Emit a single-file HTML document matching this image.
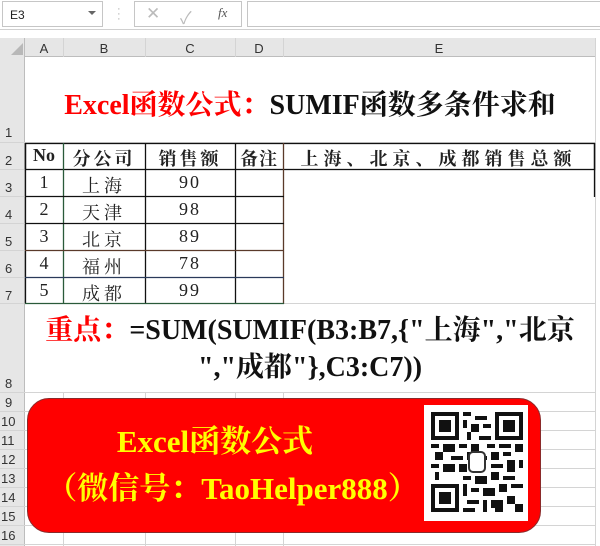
<!DOCTYPE html>
<html><head><meta charset="utf-8"><style>
*{margin:0;padding:0;box-sizing:border-box}
body{width:600px;height:546px;overflow:hidden;background:#fff;position:relative;font-family:"Liberation Sans","Noto Sans CJK SC",sans-serif}
.a{position:absolute}
.ser{font-family:"Liberation Serif","Noto Serif CJK SC",serif}
.hl{position:absolute;background:#d4d4d4}
.c{position:absolute;text-align:center;font-family:"Liberation Serif","Noto Serif CJK SC",serif;font-size:18px;color:#222}
.rh{position:absolute;left:0;width:24px;text-align:left;padding-left:5px;font-size:13px;color:#333}
</style></head><body>
<div class="a" style="left:0;top:0;width:600px;height:30px;background:#fff;border-bottom:1px solid #d0d0d0"></div>
<div class="a" style="left:2px;top:1px;width:101px;height:26px;border:1px solid #c6c6c6;font-size:12px;padding:6px 0 0 7px;color:#222">E3</div>
<div class="a" style="left:88px;top:11px;border-left:4px solid transparent;border-right:4px solid transparent;border-top:4px solid #666"></div>
<div class="a" style="left:117px;top:7px;color:#aaa;font-size:11px;line-height:5px">·<br>·<br>·</div>
<div class="a" style="left:134px;top:1px;width:108px;height:26px;border:1px solid #c6c6c6"></div>
<div class="a" style="left:146px;top:4px;color:#bbb;font-size:17px">✕</div>
<div class="a" style="left:180px;top:4px;color:#bbb;font-size:17px">✓</div>
<div class="a ser" style="left:218px;top:5px;color:#555;font-size:13px;font-style:italic">fx</div>
<div class="a" style="left:247px;top:1px;width:353px;height:26px;border:1px solid #c6c6c6;border-right:none"></div>
<div class="a" style="left:0;top:38px;width:596px;height:19px;background:#e6e6e6;border-bottom:1px solid #bdbdbd"></div>
<div class="a" style="left:0;top:38px;width:25px;height:508px;background:#e6e6e6;border-right:1px solid #bdbdbd"></div>
<div class="a" style="left:11px;top:43px;border-left:12px solid transparent;border-bottom:12px solid #b8b8b8"></div>
<div class="a" style="left:25px;top:41px;width:38px;text-align:center;font-size:13px;color:#333">A</div>
<div class="a" style="left:63px;top:41px;width:82px;text-align:center;font-size:13px;color:#333">B</div>
<div class="a" style="left:145px;top:41px;width:90px;text-align:center;font-size:13px;color:#333">C</div>
<div class="a" style="left:235px;top:41px;width:48px;text-align:center;font-size:13px;color:#333">D</div>
<div class="a" style="left:283px;top:41px;width:312px;text-align:center;font-size:13px;color:#333">E</div>
<div class="hl" style="left:63px;top:38px;width:1px;height:19px"></div>
<div class="hl" style="left:145px;top:38px;width:1px;height:19px"></div>
<div class="hl" style="left:235px;top:38px;width:1px;height:19px"></div>
<div class="hl" style="left:283px;top:38px;width:1px;height:19px"></div>
<div class="hl" style="left:595px;top:38px;width:1px;height:508px"></div>
<div class="hl" style="left:0;top:142px;width:596px;height:1px"></div>
<div class="hl" style="left:0;top:392px;width:596px;height:1px"></div>
<div class="hl" style="left:0;top:411px;width:596px;height:1px"></div>
<div class="hl" style="left:0;top:430px;width:596px;height:1px"></div>
<div class="hl" style="left:0;top:449px;width:596px;height:1px"></div>
<div class="hl" style="left:0;top:468px;width:596px;height:1px"></div>
<div class="hl" style="left:0;top:487px;width:596px;height:1px"></div>
<div class="hl" style="left:0;top:506px;width:596px;height:1px"></div>
<div class="hl" style="left:0;top:525px;width:596px;height:1px"></div>
<div class="hl" style="left:0;top:544px;width:596px;height:1px"></div>
<div class="hl" style="left:0;top:169px;width:25px;height:1px"></div>
<div class="hl" style="left:0;top:196px;width:25px;height:1px"></div>
<div class="hl" style="left:0;top:223px;width:25px;height:1px"></div>
<div class="hl" style="left:0;top:250px;width:25px;height:1px"></div>
<div class="hl" style="left:0;top:277px;width:25px;height:1px"></div>
<div class="hl" style="left:0;top:303px;width:596px;height:1px"></div>
<div class="hl" style="left:63px;top:393px;width:1px;height:153px"></div>
<div class="hl" style="left:145px;top:393px;width:1px;height:153px"></div>
<div class="hl" style="left:235px;top:393px;width:1px;height:153px"></div>
<div class="hl" style="left:283px;top:393px;width:1px;height:153px"></div>
<div class="rh" style="top:125px">1</div>
<div class="rh" style="top:153px">2</div>
<div class="rh" style="top:180px">3</div>
<div class="rh" style="top:207px">4</div>
<div class="rh" style="top:234px">5</div>
<div class="rh" style="top:261px">6</div>
<div class="rh" style="top:288px">7</div>
<div class="rh" style="top:376px">8</div>
<div class="rh" style="top:395px">9</div>
<div class="rh" style="top:414px;padding-left:1px">10</div>
<div class="rh" style="top:433px;padding-left:1px">11</div>
<div class="rh" style="top:452px;padding-left:1px">12</div>
<div class="rh" style="top:471px;padding-left:1px">13</div>
<div class="rh" style="top:490px;padding-left:1px">14</div>
<div class="rh" style="top:509px;padding-left:1px">15</div>
<div class="rh" style="top:528px;padding-left:1px">16</div>
<div class="a ser" style="left:25px;top:83px;width:570px;text-align:center;font-size:28px;font-weight:bold;white-space:nowrap;color:#111"><span style="color:#f00">Excel函数公式：</span>SUMIF函数多条件求和</div>
<svg class="a" style="left:0;top:0" width="600" height="546">
<g stroke="#111" stroke-width="1.3" fill="none">
<rect x="25.5" y="143.5" width="569" height="26"/>
<line x1="25.5" y1="143" x2="25.5" y2="304"/>
<line x1="63.5" y1="143" x2="63.5" y2="304" stroke="#2a5a3a"/>
<line x1="145.5" y1="143" x2="145.5" y2="304"/>
<line x1="235.5" y1="143" x2="235.5" y2="304"/>
<line x1="283.5" y1="143" x2="283.5" y2="304" stroke="#5a3a2a"/>
<line x1="594.5" y1="143" x2="594.5" y2="197"/>
<line x1="25" y1="196.5" x2="284" y2="196.5"/>
<line x1="25" y1="223.5" x2="284" y2="223.5"/>
<line x1="25" y1="250.5" x2="284" y2="250.5" stroke="#5a3a2a"/>
<line x1="25" y1="277.5" x2="284" y2="277.5" stroke="#2a3a5a"/>
<line x1="25" y1="303.5" x2="284" y2="303.5" stroke="#2a5a3a"/>
</g></svg>
<div class="c" style="left:25px;top:145px;width:38px;font-weight:bold">No</div>
<div class="c" style="left:63px;top:145px;width:82px;letter-spacing:3px;font-weight:bold">分公司</div>
<div class="c" style="left:145px;top:145px;width:90px;letter-spacing:3px;font-weight:bold">销售额</div>
<div class="c" style="left:235px;top:145px;width:48px;letter-spacing:1px;font-weight:bold">备注</div>
<div class="c" style="left:283px;top:145px;width:311px;letter-spacing:5px;font-weight:bold">上海、北京、成都销售总额</div>
<div class="c" style="left:25px;top:172px;width:38px">1</div><div class="c" style="left:63px;top:172px;width:82px;letter-spacing:4px">上海</div><div class="c" style="left:145px;top:172px;width:90px;letter-spacing:2px">90</div>
<div class="c" style="left:25px;top:199px;width:38px">2</div><div class="c" style="left:63px;top:199px;width:82px;letter-spacing:4px">天津</div><div class="c" style="left:145px;top:199px;width:90px;letter-spacing:2px">98</div>
<div class="c" style="left:25px;top:226px;width:38px">3</div><div class="c" style="left:63px;top:226px;width:82px;letter-spacing:4px">北京</div><div class="c" style="left:145px;top:226px;width:90px;letter-spacing:2px">89</div>
<div class="c" style="left:25px;top:253px;width:38px">4</div><div class="c" style="left:63px;top:253px;width:82px;letter-spacing:4px">福州</div><div class="c" style="left:145px;top:253px;width:90px;letter-spacing:2px">78</div>
<div class="c" style="left:25px;top:280px;width:38px">5</div><div class="c" style="left:63px;top:280px;width:82px;letter-spacing:4px">成都</div><div class="c" style="left:145px;top:280px;width:90px;letter-spacing:2px">99</div>
<div class="a ser" style="left:25px;top:312px;width:570px;text-align:center;font-size:28px;font-weight:bold;line-height:37px;color:#111;white-space:nowrap"><span style="color:#f00">重点：</span>=SUM(SUMIF(B3:B7,{"上海","北京<br>","成都"},C3:C7))</div>
<div class="a" style="left:27px;top:398px;width:514px;height:135px;background:#f00;border-radius:22px;border:1px solid #8a2a2a"></div>
<div class="a ser" style="left:40px;top:416px;width:350px;text-align:center;color:#ff0;font-weight:bold;font-size:31px;white-space:nowrap">Excel函数公式</div>
<div class="a ser" style="left:40px;top:463px;width:385px;text-align:center;color:#ff0;font-weight:bold;font-size:31px;white-space:nowrap">（微信号：TaoHelper888）</div>
<div class="a" style="left:424px;top:405px;width:104px;height:116px;background:#fff"></div>
<svg class="a" style="left:431px;top:412px" width="92" height="100" viewBox="0 0 23 25">
<g fill="#111">
<rect x="0" y="0" width="7" height="7"/><rect x="1" y="1" width="5" height="5" fill="#fff"/><rect x="2" y="2" width="3" height="3"/>
<rect x="16" y="0" width="7" height="7"/><rect x="17" y="1" width="5" height="5" fill="#fff"/><rect x="18" y="2" width="3" height="3"/>
<rect x="0" y="18" width="7" height="7"/><rect x="1" y="19" width="5" height="5" fill="#fff"/><rect x="2" y="20" width="3" height="3"/>
<path d="M8 0h2v1h-2zM11 1h3v1h-3zM8 2h1v2h-1zM10 3h2v2h-2zM13 3h2v1h-2zM9 5h1v2h-1zM12 6h3v1h-3zM0 8h2v1h-2zM3 8h3v2h-3zM7 8h2v1h-2zM10 8h2v2h-2zM14 8h2v1h-2zM17 8h3v1h-3zM21 8h2v2h-2zM1 10h2v2h-2zM5 11h3v1h-3zM15 10h2v2h-2zM18 10h2v1h-2zM0 13h2v1h-2zM3 13h3v2h-3zM7 13h2v2h-2zM15 13h3v1h-3zM19 12h2v3h-2zM22 12h1v2h-1zM1 15h1v2h-1zM8 16h2v1h-2zM11 16h3v2h-3zM15 15h2v2h-2zM18 16h3v1h-3zM8 18h1v3h-1zM10 19h2v1h-2zM13 19h3v2h-3zM17 18h2v2h-2zM20 18h3v1h-3zM9 22h3v1h-3zM13 22h1v3h-1zM15 22h3v2h-3zM19 21h2v2h-2zM21 23h2v2h-2zM8 24h3v1h-3zM16 24h2v1h-2zM2 10h1v1h-1zM12 11h2v1h-2zM9 10h1v2h-1z"/>
</g>
<rect x="9.5" y="10" width="4" height="5" rx="1" fill="#fff" stroke="#333" stroke-width=".5"/>
</svg>
</body></html>
